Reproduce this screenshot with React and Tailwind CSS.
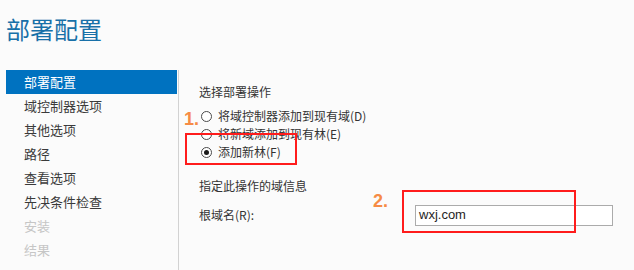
import React from 'react';

// Assistant de configuration AD DS : page "部署配置"
const steps = [
  { label: '部署配置', state: 'active' },
  { label: '域控制器选项', state: 'normal' },
  { label: '其他选项', state: 'normal' },
  { label: '路径', state: 'normal' },
  { label: '查看选项', state: 'normal' },
  { label: '先决条件检查', state: 'normal' },
  { label: '安装', state: 'disabled' },
  { label: '结果', state: 'disabled' },
];

const options = [
  { label: '将域控制器添加到现有域(D)', checked: false },
  { label: '将新域添加到现有林(E)', checked: false },
  { label: '添加新林(F)', checked: true },
];

function Radio({ checked }) {
  return (
    <span className="flex h-[11px] w-[11px] items-center justify-center rounded-full border border-[#4a4a4a] bg-white">
      {checked && <span className="h-[5px] w-[5px] rounded-full bg-[#1a1a1a]" />}
    </span>
  );
}

export default function App() {
  return (
    <div
      className="relative h-[270px] w-[634px] overflow-hidden bg-[#fbfbfb] text-[#333]"
      style={{ fontFamily: '"Noto Sans CJK SC", "Liberation Sans", sans-serif' }}
    >
      <div className="h-[70px] pl-[6px] pt-[15px] text-[24px] leading-[28px] text-[#1870a8]">部署配置</div>

      <div className="flex h-[200px]">
        <div className="ml-[6px] w-[171px]">
          {steps.map(step => (
            <div
              key={step.label}
              className={
                step.state === 'active'
                  ? 'h-[24px] bg-[#0072c0] pl-[18px] text-[13px] leading-[24px] text-white'
                  : step.state === 'disabled'
                  ? 'h-[24px] pl-[18px] text-[13px] leading-[24px] text-[#c6c6c6]'
                  : 'h-[24px] pl-[18px] text-[13px] leading-[24px] text-[#3a3a3a]'
              }
            >
              {step.label}
            </div>
          ))}
        </div>
        <div className="ml-[1px] w-px bg-[#d2d2d2]" />

        <div className="flex-1 pl-[20px] pt-[12px] text-[12px]">
          <div className="h-[20px] leading-[20px]">选择部署操作</div>
          <div className="mt-[5px]">
            {options.map(opt => (
              <div key={opt.label} className="flex h-[18px] items-center">
                <span className="ml-[2px] mr-[6px]">
                  <Radio checked={opt.checked} />
                </span>
                <span className="leading-[18px]">{opt.label}</span>
              </div>
            ))}
          </div>
          <div className="mt-[15px] h-[20px] leading-[20px]">指定此操作的域信息</div>
          <div className="mt-[8px] flex h-[22px] items-center">
            <div className="w-[216px] leading-[22px]">根域名(R):</div>
            <div
              className="flex h-[21px] w-[198px] items-center border border-[#ababab] bg-white pl-[3px] text-[13px] text-[#1e1e1e]"
              style={{ fontFamily: '"Liberation Sans", sans-serif' }}
            >
              wxj.com
            </div>
          </div>
        </div>
      </div>

      {/* annotations */}
      <div
        className="absolute left-[184px] top-[110px] text-[18px] font-bold leading-[18px] text-[#f68b45]"
        style={{ fontFamily: '"Liberation Sans", sans-serif' }}
      >
        1.
      </div>
      <div className="absolute left-[185px] top-[133px] h-[32px] w-[112px] border-2 border-[#ff1c1c]" />
      <div
        className="absolute left-[373px] top-[192px] text-[18px] font-bold leading-[18px] text-[#f68b45]"
        style={{ fontFamily: '"Liberation Sans", sans-serif' }}
      >
        2.
      </div>
      <div className="absolute left-[402px] top-[190px] h-[43px] w-[174px] border-2 border-[#ff1c1c]" />
    </div>
  );
}
